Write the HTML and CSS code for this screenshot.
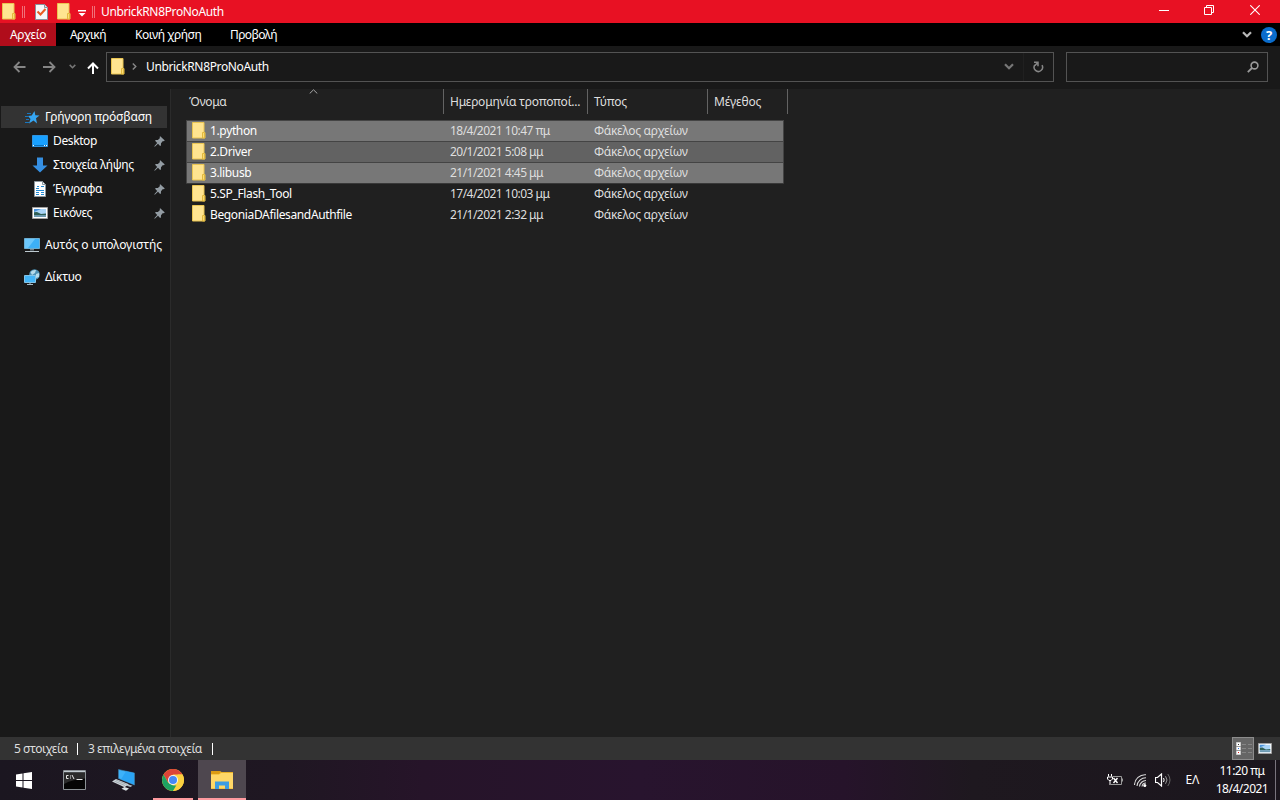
FILE: index.html
```
<!DOCTYPE html>
<html lang="el">
<head>
  <meta charset="UTF-8">
  <meta name="viewport" content="width=device-width, initial-scale=1.0">
  <title>UnbrickRN8ProNoAuth</title>
  <link rel="stylesheet" href="styles.css">
</head>
<body>
  <svg class="defs" width="0" height="0">
    <symbol id="folder" viewBox="0 0 14 17">
      <path d="M.5 .5h11.500v10h1v5.500H.5z" fill="#ffe490" stroke="#eac552"/>
      <path d="M10.500 10.500h2v5.500h-2z" fill="#fbdc78" stroke="#e2b93c"/>
    </symbol>
    <symbol id="pin" viewBox="0 0 11 11">
      <path d="M6.2 0.3 10.8 4.6 9.7 5.3 8.9 5.1 7 7.2 6.9 9.4 6.1 10 4 7.8 .8 10.7.3 10.3 3.2 7 1.1 4.8 1.7 4.1 3.9 4 6 2.1 5.6 1.1z" fill="#939ca3"/>
    </symbol>
    <symbol id="picture" viewBox="0 0 16 12">
      <path d="M.5 .5h15v11H.5z" fill="#fff" stroke="#a0a0a0"/>
      <path d="M2 2h12v8H2z" fill="#a9d4f7"/>
      <path d="M2 2h7L2 5z" fill="#4b93dc"/>
      <path d="M2 5.2 5 5l4 2 5-.5V8H2z" fill="#2f5f55"/>
      <path d="M2 8h12v2H2z" fill="#6d9ab1"/>
    </symbol>
    <symbol id="chevron" viewBox="0 0 10 7">
      <path d="M1 1.2 5 5.2 9 1.2" fill="none" stroke="currentColor" stroke-width="2.200"/>
    </symbol>
  </svg>

  <header class="titlebar">
    <svg class="tb-folder" width="14" height="17"><use href="#folder"/></svg>
    <span class="tb-sep"></span>
    <svg class="tb-check" width="13" height="16" viewBox="0 0 13 16">
      <path d="M.5 .5h9l3 3v12H.5z" fill="#f6f7f8" stroke="#87939c"/>
      <path d="M9.500 .5v3h3" fill="#dfe3e6" stroke="#87939c"/>
      <path d="M2.500 7.500 5.500 10.500 10.500 5" fill="none" stroke="#ea5c22" stroke-width="2"/>
    </svg>
    <svg class="tb-folder second" width="14" height="17"><use href="#folder"/></svg>
    <svg class="tb-more" width="8" height="8" viewBox="0 0 8 8"><path d="M0 0h8v1.500H0zM.5 3h7L4 6.500z" fill="#fff"/></svg>
    <span class="tb-sep last"></span>
    <span class="tb-title">UnbrickRN8ProNoAuth</span>
    <div class="caption">
      <svg width="10" height="10" viewBox="0 0 10 10"><path d="M0 5.500h10" stroke="#fff"/></svg>
      <svg width="10" height="10" viewBox="0 0 10 10"><path d="M.5 2.500h7v7h-7zM2.500 2.500v-2h7v7h-2" fill="none" stroke="#fff"/></svg>
      <svg width="10" height="10" viewBox="0 0 10 10"><path d="M.3 .3 9.700 9.700M9.700 .3.3 9.700" stroke="#fff" stroke-width="1.100"/></svg>
    </div>
  </header>

  <nav class="ribbon">
    <span class="tab file">Αρχείο</span>
    <span class="tab home">Αρχική</span>
    <span class="tab share">Κοινή χρήση</span>
    <span class="tab view">Προβολή</span>
    <svg class="expand" width="10" height="7"><use href="#chevron"/></svg>
    <span class="help">?</span>
  </nav>

  <div class="navbar">
    <svg class="back" width="13" height="12" viewBox="0 0 13 12"><path d="M12.500 6H1.500M6.500 1 1.500 6l5 5" fill="none" stroke="#858585" stroke-width="1.800"/></svg>
    <svg class="forward" width="13" height="12" viewBox="0 0 13 12"><path d="M0 6h11.500M6.500 1l5 5-5 5" fill="none" stroke="#858585" stroke-width="1.800"/></svg>
    <svg class="recent" width="7" height="5"><use href="#chevron"/></svg>
    <svg class="up" width="12" height="12" viewBox="0 0 12 12"><path d="M6 12V1.500M1 6.500l5-5 5 5" fill="none" stroke="#fff" stroke-width="2"/></svg>
    <div class="address">
      <svg width="14" height="17"><use href="#folder"/></svg>
      <svg class="crumb" width="5" height="7" viewBox="0 0 5 7"><path d="M.8 .5 3.800 3.500l-3 3" fill="none" stroke="#888" stroke-width="1.400"/></svg>
      <span class="path">UnbrickRN8ProNoAuth</span>
      <svg class="drop" width="10" height="7"><use href="#chevron"/></svg>
      <span class="refresh">
        <svg width="11" height="12" viewBox="0 0 11 12"><path d="M1.800 4A4.200 4.200 0 1 0 9 4.200M1 1.200h4v4M4.800 1.400 2 4.500" fill="none" stroke="#868686" stroke-width="1.500"/></svg>
      </span>
    </div>
    <div class="search">
      <svg width="12" height="12" viewBox="0 0 12 12"><circle cx="7.500" cy="4.500" r="3.400" fill="none" stroke="#9a9a9a" stroke-width="1.600"/><path d="M5 7 .8 11.200" stroke="#9a9a9a" stroke-width="1.800"/></svg>
    </div>
  </div>

  <main class="content">
    <aside class="sidebar">
      <div class="item quick">
        <svg width="15" height="13" viewBox="0 0 15 13"><path d="m9.500 0 .8 4.200 4.200.3-3.500 2.800 1 5.200-3.500-3-4.500 3L5.500 8 3 5l3.700-.6z" fill="#35a5f2"/><path d="M2 2.500h4M0 5.500h4M1 8.500h3M0 11.500h4" stroke="#1977bd"/></svg>
        <span>Γρήγορη πρόσβαση</span>
      </div>
      <div class="item sub">
        <svg width="16" height="12" viewBox="0 0 16 12"><path d="M.5 .5h15v11H.5z" fill="#18a0ff" stroke="#2f93df"/><path d="M1 10.500h14" stroke="#0870bb"/><path d="M1 10.500h1m10 0h1m1 0h1" stroke="#fff"/></svg>
        <span class="desktop">Desktop</span>
        <svg class="pin" width="11" height="11"><use href="#pin"/></svg>
      </div>
      <div class="item sub">
        <svg width="16" height="16" viewBox="0 0 16 16"><path d="M5 .5h6v8h4.500L8 15.500.5 8.500H5z" fill="#358fe2"/></svg>
        <span class="downloads">Στοιχεία λήψης</span>
        <svg class="pin" width="11" height="11"><use href="#pin"/></svg>
      </div>
      <div class="item sub">
        <svg width="16" height="16" viewBox="0 0 16 16"><path d="M2.500 .5h8l3 3v12h-11z" fill="#fff" stroke="#8e989e"/><path d="M10.500 .5v3h3" fill="none" stroke="#8e989e"/><path d="M4 7.500h3m2-2h3M4 9.500h8M4 11.500h3m2 0h3M4 13.500h3m2 0h3M5 5.500h2" stroke="#2389d1"/></svg>
        <span class="documents">Έγγραφα</span>
        <svg class="pin" width="11" height="11"><use href="#pin"/></svg>
      </div>
      <div class="item sub">
        <svg width="16" height="12"><use href="#picture"/></svg>
        <span class="pictures">Εικόνες</span>
        <svg class="pin" width="11" height="11"><use href="#pin"/></svg>
      </div>
      <div class="item root">
        <svg width="16" height="16" viewBox="0 0 16 16"><path d="M.5 1.500h15v10H.5z" fill="#3db0f7" stroke="#6caed2"/><path d="M1 2h10L4 11H1z" fill="#6cc7fb"/><path d="M6 12h4v1.500H6z" fill="#71838d"/><path d="M1 14.500h14" stroke="#bdc9cf"/></svg>
        <span class="computer">Αυτός ο υπολογιστής</span>
      </div>
      <div class="item root">
        <svg width="16" height="16" viewBox="0 0 16 16"><circle cx="10.500" cy="5.500" r="5.300" fill="#4e92b5"/><path d="M6.500 3Q9 .5 12 1l-1 3-3 2zM12 5l3-1v4l-3 1z" fill="#b6dceb"/><path d="M.5 6.500h11v7H.5z" fill="#43b5f8" stroke="#84c5e8"/><path d="M6 14v1M3 15.500h6" stroke="#a7bac5"/></svg>
        <span class="network">Δίκτυο</span>
      </div>
    </aside>

    <section class="files">
      <div class="row head">
        <span class="name">Όνομα</span>
        <span class="date">Ημερομηνία τροποποί...</span>
        <span class="type">Τύπος</span>
        <span class="size">Μέγεθος</span>
        <svg class="sort" width="9" height="5" viewBox="0 0 9 5"><path d="M.7 4.500 4.500 .8l3.800 3.700" fill="none" stroke="#aaa"/></svg>
      </div>
      <div class="row selected">
        <span class="name"><svg width="14" height="17"><use href="#folder"/></svg>1.python</span>
        <span class="date">18/4/2021 10:47 πμ</span>
        <span class="type">Φάκελος αρχείων</span>
      </div>
      <div class="row selected focus">
        <span class="name"><svg width="14" height="17"><use href="#folder"/></svg>2.Driver</span>
        <span class="date">20/1/2021 5:08 μμ</span>
        <span class="type">Φάκελος αρχείων</span>
      </div>
      <div class="row selected">
        <span class="name"><svg width="14" height="17"><use href="#folder"/></svg>3.libusb</span>
        <span class="date">21/1/2021 4:45 μμ</span>
        <span class="type">Φάκελος αρχείων</span>
      </div>
      <div class="row after">
        <span class="name"><svg width="14" height="17"><use href="#folder"/></svg>5.SP_Flash_Tool</span>
        <span class="date">17/4/2021 10:03 μμ</span>
        <span class="type">Φάκελος αρχείων</span>
      </div>
      <div class="row">
        <span class="name"><svg width="14" height="17"><use href="#folder"/></svg>BegoniaDAfilesandAuthfile</span>
        <span class="date">21/1/2021 2:32 μμ</span>
        <span class="type">Φάκελος αρχείων</span>
      </div>
    </section>
  </main>

  <div class="statusbar">
    <span class="count">5 στοιχεία</span>
    <span class="chosen">3 επιλεγμένα στοιχεία</span>
    <div class="views">
      <span class="details">
        <svg width="16" height="13" viewBox="0 0 16 13"><path d="M.5 .5h4v12h-4z" fill="#fff" stroke="#ccc"/><path d="M0 4.500h5M0 8.500h5" stroke="#999"/><path d="M2 2h1v1H2z" fill="#333"/><path d="M2 6h1v1H2z" fill="#2870e0"/><path d="M2 10h1v1H2z" fill="#e02020"/><path d="M6 2.500h4m2 0h4M6 6.500h4m2 0h4M6 10.500h4m2 0h4" stroke="#858585"/></svg>
      </span>
      <svg width="14" height="11" viewBox="0 0 16 12" preserveAspectRatio="none"><use href="#picture"/></svg>
    </div>
  </div>

  <footer class="taskbar">
    <span class="task start">
      <svg width="16" height="17" viewBox="0 0 16 17"><path d="M0 2.400 6.500 1.400v6.600H0zM7.500 1.200 16 0v8H7.500zM0 9h6.500v6.500L0 14.500zM7.500 9H16v8l-8.500-1.200z" fill="#fff"/></svg>
    </span>
    <span class="task cmd">
      <svg width="23" height="20" viewBox="0 0 23 20"><path d="M.5 .5h22v19H.5z" fill="#050505" stroke="#8c9296"/><path d="M1 1h21v1.500H1z" fill="#c3ccd2"/><path d="M1 2.500h21v6Q10 9 1 14z" fill="#2b2b2b"/><path d="M5.500 5.500H3.500v3h2M7.500 5.500v1m0 1v1M9 5l2 4M13.500 9.500h6" fill="none" stroke="#e8e8e8"/></svg>
    </span>
    <span class="task pc">
      <svg width="24" height="22" viewBox="0 0 24 22"><path d="M6.500 .5 22.500 4v12L6.500 9.500z" fill="#3db2fa" stroke="#3a7ca5" stroke-width=".6"/><path d="M14 2.200 22 4v11.400L9 10.200z" fill="#2ba4f4"/><path d="m0 12.500 4-2.500L17 15.300 12.500 18.300z" fill="#ced5d9"/><path d="m2.500 12.200 10.500 4.300M4 11 14.500 15.300" stroke="#84919a" stroke-width=".6"/><path d="m16.500 15.500 4 1.300-2 1.200-4-1.200z" fill="#b3bec4"/><path d="m9.500 19.800 3-1.800 4.500 1.500-3 2.300z" fill="#dbe2e5"/></svg>
    </span>
    <span class="task chrome">
      <svg width="22" height="22" viewBox="0 0 22 22"><circle cx="11" cy="11" r="11" fill="#fcd140"/><path d="M1.500 5.500A11 11 0 0 1 20.500 5.500H11L6.200 13.800z" fill="#dc4437"/><path d="M1.500 5.500 6.200 13.800 11 16.500h4.800L11 22A11 11 0 0 1 1.500 5.500z" fill="#1da362"/><path d="M20.500 5.500A11 11 0 0 1 11 22l4.800-8.200V5.500z" fill="#fcd140"/><circle cx="11" cy="11" r="5" fill="#f5f5f5"/><circle cx="11" cy="11" r="4" fill="#4688f4"/></svg>
    </span>
    <span class="task explorer">
      <svg width="22" height="18" viewBox="0 0 22 18"><path d="M0 0h9l1.500 1H22v17H0z" fill="#eab026"/><path d="M0 3.500h8L10 2h12v15.500H0z" fill="#ffd767"/><path d="M0 0h9v2L7.500 3H0z" fill="#dc9b13"/><path d="M4 18v-7.500h14V18h-4v-3.500H8V18z" fill="#3c9ce3"/></svg>
    </span>
    <div class="tray">
      <svg class="battery" width="16" height="12" viewBox="0 0 16 12"><path d="M1.500 0v2.500m3-2.500v2.500M.5 3h5v2L4 6.500H2L.5 5zM3 6.500V11" fill="none" stroke="#fff"/><path d="M5.500 2.500h9v8H4M15.500 4.500v3" fill="none" stroke="#999"/><path d="m6.500 4 4 5M10.500 4l-4 5" stroke="#fff" stroke-width="1.400"/></svg>
      <svg class="wifi" width="13" height="13" viewBox="0 0 13 13"><path d="M.5 11A10.500 10.500 0 0 1 12 .8M3 12A9 9 0 0 1 12 3.800M5.500 12.500A6.500 6.500 0 0 1 12 6.500M8 12.500a4 4 0 0 1 4-3.500" fill="none" stroke="#ddd" stroke-width="1.100"/><circle cx="10.800" cy="11.500" r="1.500" fill="#fff"/></svg>
      <svg class="volume" width="16" height="14" viewBox="0 0 16 14"><path d="M.5 4.500h2l4-3.500v12l-4-3.500h-2z" fill="none" stroke="#fff" stroke-width="1.200"/><path d="M8.500 5q1.300 2 0 4" fill="none" stroke="#fff"/><path d="M10.500 3.200q3 3.800 0 7.600" fill="none" stroke="#999"/><path d="M12.800 1q4.400 6 0 12" fill="none" stroke="#666"/></svg>
      <span class="lang">ΕΛ</span>
      <div class="clock"><span class="time">11:20 πμ</span><span class="day">18/4/2021</span></div>
      <span class="peek"></span>
    </div>
  </footer>
</body>
</html>
```
FILE: styles.css
```
* {
  box-sizing: border-box;
}
body {
  margin: 0;
  width: 1280px;
  height: 800px;
  display: flex;
  flex-direction: column;
  overflow: hidden;
  background: #202020;
  color: #fff;
  font-family: "Noto Sans", "Open Sans", sans-serif;
  font-size: 12px;
  line-height: 16px;
  letter-spacing: -0.3px;
  white-space: nowrap;
}
svg {
  display: block;
  flex: none;
}
.defs {
  position: absolute;
}

/* title bar */
.titlebar {
  height: 23px;
  background: #e81123;
  display: flex;
  align-items: center;
  padding-left: 2px;
}
.tb-sep {
  width: 3px;
  height: 12px;
  margin: 0 10px 0 6px;
  border: solid #f0707a;
  border-width: 0 1px;
}
.tb-folder.second {
  margin-left: 9px;
}
.tb-more {
  margin: 4px 6px 0 7px;
}
.tb-sep.last {
  margin: 0 6px 0 0;
}
.tb-title,
.path {
  letter-spacing: -0.36px;
}
.caption {
  margin: -3px 20px 0 auto;
  display: flex;
  gap: 36px;
}
.caption svg:first-child {
  margin-right: -1px;
}

/* ribbon tabs */
.ribbon {
  height: 23px;
  background: #000;
  display: flex;
  align-items: center;
}
.tab {
  line-height: 24px;
  letter-spacing: -0.45px;
}
.tab.file {
  width: 56px;
  height: 23px;
  padding-left: 10px;
  background: #b00d1b;
  letter-spacing: -0.35px;
}
.tab.home {
  width: 79px;
  padding-left: 14px;
  letter-spacing: -0.6px;
}
.tab.share {
  width: 95px;
}
.tab.view {
  letter-spacing: -0.6px;
}
.expand {
  margin-left: auto;
  color: #b8b8b8;
}
.help {
  width: 16px;
  height: 16px;
  margin: 0 3px 0 9px;
  border-radius: 50%;
  background: #0a6ccc;
  font-size: 13px;
  font-weight: 700;
  line-height: 16px;
  text-align: center;
}

/* address row */
.navbar {
  height: 43px;
  background: #191919;
  display: flex;
  align-items: center;
  padding: 0 12px 2px 13px;
}
.forward {
  margin-left: 17px;
}
.recent {
  margin: 0 12px 0 13px;
  color: #777;
}
.up {
  margin: 2px 0 0 -1px;
}
.address {
  width: 948px;
  height: 30px;
  margin-left: 7px;
  border: 1px solid #535353;
  display: flex;
  align-items: center;
  padding-left: 4px;
}
.address > svg:first-child {
  margin-top: -1px;
}
.crumb {
  margin: 0 9px 0 7px;
}
.path {
  padding-top: 1px;
}
.drop {
  margin-left: auto;
  color: #777;
}
.refresh {
  height: 28px;
  width: 30px;
  margin-left: 9px;
  border-left: 1px solid #202020;
  display: flex;
  align-items: center;
  padding-left: 9px;
}
.search {
  width: 202px;
  height: 30px;
  margin-left: 12px;
  border: 1px solid #535353;
  display: flex;
  align-items: center;
  justify-content: flex-end;
  padding-right: 8px;
}

/* folder tree */
.content {
  height: 648px;
  display: flex;
}
.sidebar {
  width: 171px;
  background: #191919;
  border-right: 1px solid #2b2b2b;
  padding: 17px 2px 0 1px;
}
.item {
  height: 24px;
  display: flex;
  align-items: center;
  gap: 5px;
}
.quick {
  height: 22px;
  width: 166px;
  margin-bottom: 1px;
  padding-left: 24px;
  background: #333;
  letter-spacing: -0.18px;
}
.sub {
  padding-left: 31px;
}
.desktop,
.documents,
.pictures,
.downloads {
  letter-spacing: -0.38px;
}
.pin {
  margin: 0 3px 0 auto;
}
.root {
  margin-top: 8px;
  padding-left: 23px;
}
.computer {
  letter-spacing: -0.06px;
}

/* file list */
.files {
  width: 1109px;
  padding-left: 15px;
}
.row {
  width: 598px;
  height: 21px;
  display: grid;
  grid-template-columns: 258px 144px 120px 80px;
  align-items: center;
}
.row .name {
  display: flex;
  align-items: center;
  gap: 4px;
  letter-spacing: -0.36px;
}
.row .name svg {
  margin-top: -2px;
}
.row > span {
  padding-left: 6px;
}
.row .date,
.row .type {
  padding-left: 6px;
  color: #dedede;
}
.row .date {
  letter-spacing: -0.53px;
}
.row.selected {
  background: #777;
  border: solid #444;
  border-width: 1px 1px 0 1px;
}
.row.selected > span {
  position: relative;
  left: -1px;
}
.row.focus {
  background: #626262;
}
.row.after {
  border-top: 1px solid #383838;
}
.row.head {
  position: relative;
  width: 602px;
  height: 25px;
  margin-bottom: 6px;
  color: #dedede;
}
.head > span {
  height: 25px;
  line-height: 26px;
  border-right: 1px solid #636363;
}
.row.head .name {
  padding-left: 3px;
  letter-spacing: -0.3px;
}
.row.head .date {
  letter-spacing: -0.22px;
}
.head .type,
.head .size {
  letter-spacing: -0.22px;
}
.sort {
  position: absolute;
  left: 123px;
  top: 0;
}

/* status bar */
.statusbar {
  height: 23px;
  background: #333;
  display: flex;
  align-items: center;
  padding-left: 14px;
  color: #dedede;
}
.statusbar > span {
  line-height: 12px;
  border-right: 1px solid #fff;
  letter-spacing: -0.43px;
}
.count {
  width: 64px;
}
.chosen {
  width: 135px;
  padding-left: 10px;
}
.views {
  margin: 0 8px 0 auto;
  display: flex;
  align-items: center;
  gap: 4px;
}
.details {
  width: 22px;
  height: 23px;
  background: #666;
  border: 1px solid #8c8c8c;
  display: flex;
  align-items: center;
  padding-left: 3px;
}

/* taskbar */
.taskbar {
  height: 40px;
  background: linear-gradient(90deg, #1b1620 0%, #1f1722 22%, #261429 33%, #28142e 50%, #26132a 66%, #1e181f 76%, #1b161d 100%);
  display: flex;
}
.task {
  width: 48px;
  height: 40px;
  margin-right: 2px;
  display: flex;
  align-items: center;
  justify-content: center;
}
.task.cmd {
  padding-bottom: 1px;
}
.task.chrome {
  width: 40px;
  margin: 0 5px 0 3px;
  box-shadow: inset 0 -2px #fe9a9f;
}
.task.explorer {
  background: #4e474f;
  box-shadow: inset 0 -2px #fe9a9f;
}
.tray {
  margin-left: auto;
  display: flex;
  align-items: center;
}
.wifi {
  margin-left: 11px;
}
.volume {
  margin-left: 8px;
}
.lang {
  margin-left: 15px;
}
.clock {
  width: 58px;
  margin-left: 14px;
  display: flex;
  flex-direction: column;
  align-items: center;
  line-height: 18px;
  letter-spacing: -0.5px;
}
.peek {
  width: 5px;
  height: 40px;
  margin-left: 4px;
  border-left: 1px solid #79747d;
}
```
